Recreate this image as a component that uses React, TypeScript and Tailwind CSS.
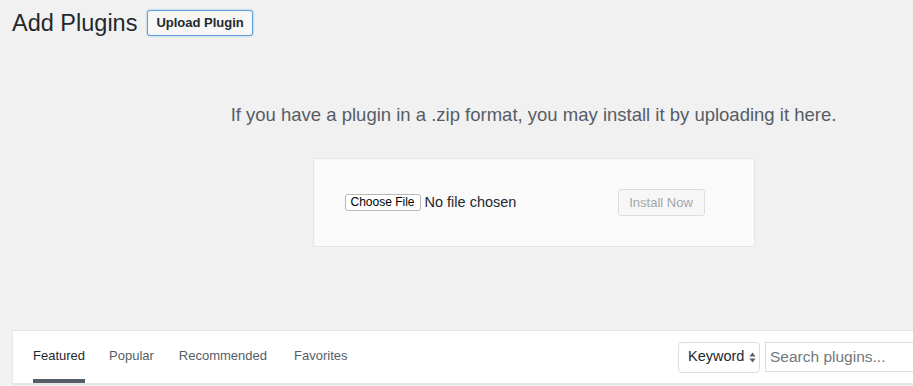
import { useState } from "react";

const tabs = [
  { label: "Featured", gap: "" },
  { label: "Popular", gap: "ml-[24px]" },
  { label: "Recommended", gap: "ml-[25px]" },
  { label: "Favorites", gap: "ml-[27px]" },
];

function SortArrows() {
  return (
    <svg width="7" height="11" viewBox="0 0 7 11" className="ml-[5px] shrink-0">
      <path d="M3.5 0.5 L6.5 4.5 L0.5 4.5 Z" fill="#555d66" />
      <path d="M3.5 10.5 L6.5 6.5 L0.5 6.5 Z" fill="#555d66" />
    </svg>
  );
}

export default function App() {
  const [active, setActive] = useState("Featured");

  return (
    <div className="w-[913px] h-[386px] overflow-hidden bg-[#f1f1f1] font-['Liberation_Sans',Arial,sans-serif]">
      <div className="ml-3 w-[1043px]">
        {/* heading */}
        <div className="flex items-center pt-[10px]">
          <h1 className="text-[23.5px] leading-[26px] text-[#23282d] font-normal">Add Plugins</h1>
          <button className="ml-[10px] h-[26px] px-[8px] rounded-[3px] border border-[#5b9dd9] bg-[#f7f7f7] text-[13px] font-bold text-[#23282d] shadow-[0_0_2px_rgba(30,140,190,0.5)]">
            Upload Plugin
          </button>
        </div>

        {/* upload area */}
        <p className="mt-[66px] text-center text-[18.5px] leading-[26px] text-[#555d66]">
          If you have a plugin in a .zip format, you may install it by uploading it here.
        </p>
        <div className="mx-auto mt-[30px] w-[442px] p-[30px] border border-[#e5e5e5] bg-[#fafafa]">
          <div className="flex items-center h-[27px]">
            <div className="flex items-center w-[274px] pl-[1px]">
              <button className="h-[17px] px-[5px] rounded-[3px] border border-[#b8b8b8] bg-white text-[12px] leading-[15px] text-black">
                Choose File
              </button>
              <span className="ml-[4px] text-[14.5px] text-[#23282d]">No file chosen</span>
            </div>
            <button className="h-[27px] w-[87px] rounded-[3px] border border-[#ddd] bg-[#f7f7f7] text-[13px] text-[#a0a5aa]">
              Install Now
            </button>
          </div>
        </div>

        {/* filter bar */}
        <div className="mt-[83px] flex items-center justify-between border border-[#e5e5e5] bg-white shadow-[0_1px_1px_rgba(0,0,0,0.04)]">
          <ul className="flex pl-[20px]">
            {tabs.map((t) => (
              <li key={t.label} className={t.gap}>
                <button
                  onClick={() => setActive(t.label)}
                  className={
                    "block pt-[16px] pb-[14px] border-b-4 text-[13px] leading-[18px] " +
                    (active === t.label ? "border-[#555d66] text-[#23282d]" : "border-transparent text-[#555d66]")
                  }
                >
                  {t.label}
                </button>
              </li>
            ))}
          </ul>
          <div className="flex items-center gap-[5px] pr-[19px]">
            <div className="flex items-center h-[31px] w-[82px] pl-[9px] rounded-[4px] border border-[#ddd] bg-white text-[14.5px] text-[#23282d]">
              Keyword
              <SortArrows />
            </div>
            <input
              placeholder="Search plugins..."
              className="h-[30px] w-[270px] px-[4px] border border-[#ddd] bg-white text-[15.5px] text-[#32373c] placeholder:text-[#72777c] outline-none"
            />
          </div>
        </div>
      </div>
    </div>
  );
}
